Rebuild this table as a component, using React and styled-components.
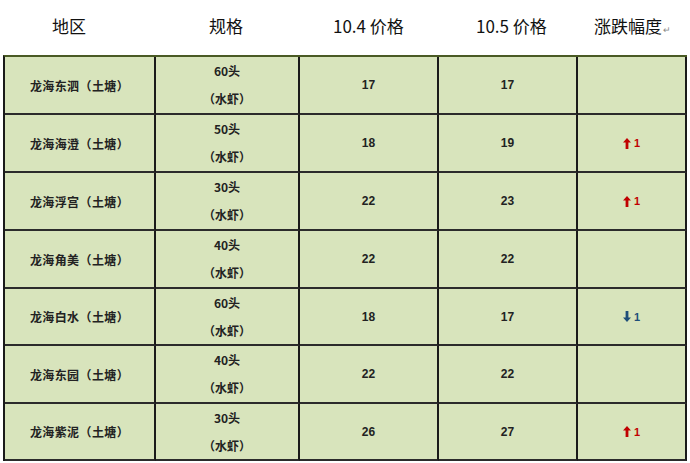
import React from "react";
import styled, { createGlobalStyle } from "styled-components";

const Global = createGlobalStyle`
  html, body { margin: 0; padding: 0; background: #ffffff; }
  body { font-family: "Noto Sans CJK SC", "Liberation Sans", sans-serif; }
`;

const COLS = "151px 144px 139px 139px 109px";

const Page = styled.div`
  width: 690px;
  height: 463px;
  overflow: hidden;
  padding-left: 3px;
  box-sizing: border-box;
`;

const HeaderRow = styled.div`
  display: grid;
  grid-template-columns: 157px 124px 143px 118px 1fr;
  height: 55px;
  align-items: center;
  padding: 0 0 5px 49px;
  box-sizing: border-box;
`;

const HeaderCell = styled.div`
  text-align: left;
  font-size: 17px;
  color: #111;
  font-weight: 400;
  white-space: nowrap;
`;

const Mark = styled.span`
  font-size: 9px;
  color: #888;
  margin-left: 1px;
`;

const Table = styled.div`
  display: grid;
  grid-template-columns: ${COLS};
  width: 684px;
  border-left: 2px solid #1a1a1a;
  border-top: 2px solid #4a5a24;
  background: #d8e4bc;
  box-sizing: border-box;
`;

const Cell = styled.div`
  height: ${(p) => p.$h}px;
  box-sizing: border-box;
  border-right: 2px solid #1a1a1a;
  border-bottom: 2px solid #2b2b2b;
  display: flex;
  flex-direction: column;
  align-items: center;
  justify-content: center;
  font-weight: 700;
  font-size: 12px;
  color: #222;
`;

const Region = styled.span`
  font-size: 12px;
  letter-spacing: 0.4px;
`;

const SpecLine = styled.span`
  line-height: 28px;
  font-size: 12px;
`;

const Num = styled.span`
  font-family: "Liberation Sans", sans-serif;
  font-size: 12px;
  font-weight: 700;
  color: #222;
`;

const Change = styled.span`
  display: inline-flex;
  align-items: center;
  gap: 3px;
  font-family: "Liberation Sans", sans-serif;
  font-size: 11px;
  font-weight: 700;
  color: ${(p) => (p.$up ? "#c00000" : "#1f4e79")};
`;

const Arrow = ({ up, color }) => (
  <svg width="8" height="11" viewBox="0 0 8 11">
    {up ? (
      <path d="M4 0 L8 4.5 L5.4 4.5 L5.4 11 L2.6 11 L2.6 4.5 L0 4.5 Z" fill={color} />
    ) : (
      <path d="M4 11 L8 6.5 L5.4 6.5 L5.4 0 L2.6 0 L2.6 6.5 L0 6.5 Z" fill={color} />
    )}
  </svg>
);

const rows = [
  { region: "龙海东泗（土塘）", spec: "60头", a: "17", b: "17", ch: null, h: 58 },
  { region: "龙海海澄（土塘）", spec: "50头", a: "18", b: "19", ch: "up", h: 58 },
  { region: "龙海浮宫（土塘）", spec: "30头", a: "22", b: "23", ch: "up", h: 58 },
  { region: "龙海角美（土塘）", spec: "40头", a: "22", b: "22", ch: null, h: 58 },
  { region: "龙海白水（土塘）", spec: "60头", a: "18", b: "17", ch: "down", h: 57 },
  { region: "龙海东园（土塘）", spec: "40头", a: "22", b: "22", ch: null, h: 58 },
  { region: "龙海紫泥（土塘）", spec: "30头", a: "26", b: "27", ch: "up", h: 57 },
];

export default function App() {
  return (
    <Page>
      <Global />
      <HeaderRow>
        <HeaderCell>地区</HeaderCell>
        <HeaderCell>规格</HeaderCell>
        <HeaderCell>10.4 价格</HeaderCell>
        <HeaderCell>10.5 价格</HeaderCell>
        <HeaderCell>
          涨跌幅度<Mark>↵</Mark>
        </HeaderCell>
      </HeaderRow>
      <Table>
        {rows.map((r, i) => (
          <React.Fragment key={i}>
            <Cell $h={r.h}>
              <Region>{r.region}</Region>
            </Cell>
            <Cell $h={r.h}>
              <SpecLine>{r.spec}</SpecLine>
              <SpecLine>（水虾）</SpecLine>
            </Cell>
            <Cell $h={r.h}>
              <Num>{r.a}</Num>
            </Cell>
            <Cell $h={r.h}>
              <Num>{r.b}</Num>
            </Cell>
            <Cell $h={r.h}>
              {r.ch && (
                <Change $up={r.ch === "up"}>
                  <Arrow up={r.ch === "up"} color={r.ch === "up" ? "#c00000" : "#1f4e79"} />
                  1
                </Change>
              )}
            </Cell>
          </React.Fragment>
        ))}
      </Table>
    </Page>
  );
}
